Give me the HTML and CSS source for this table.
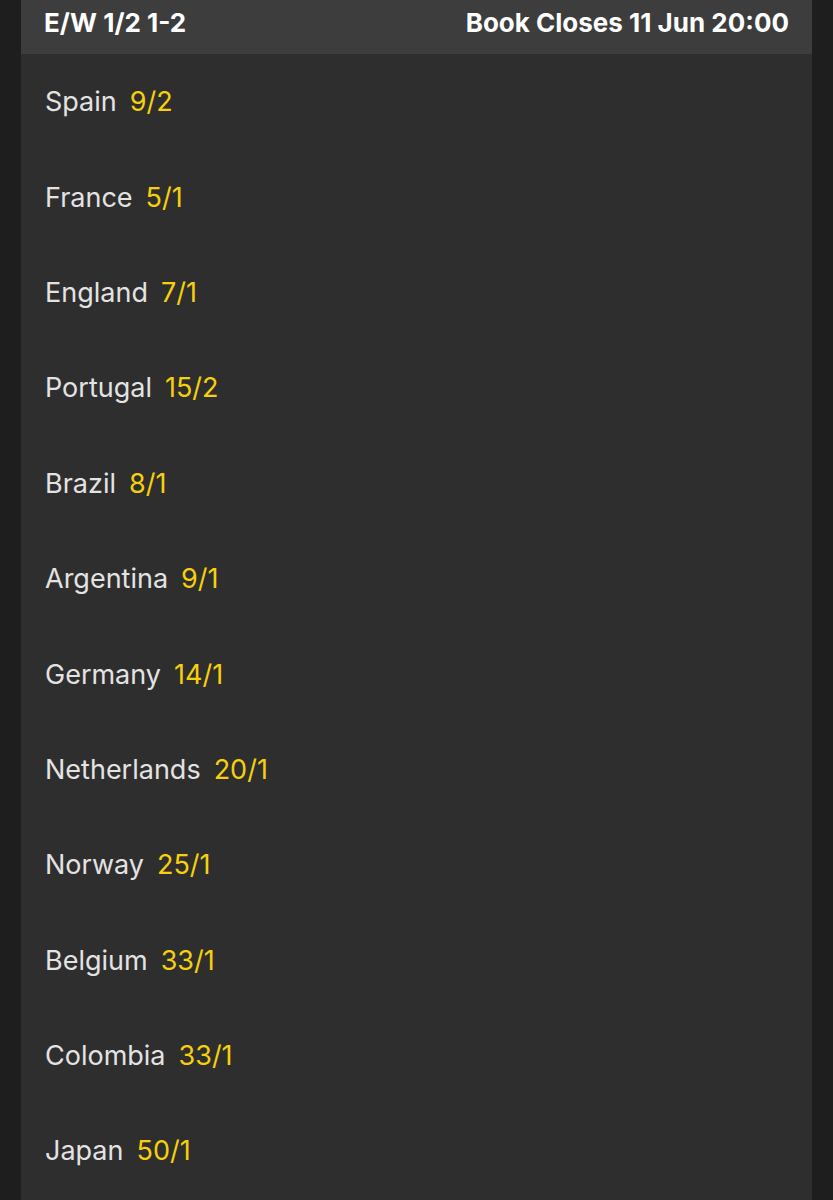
FILE: index.html
```html
<!DOCTYPE html>
<html lang="en">
<head>
  <meta charset="UTF-8" />
  <meta name="viewport" content="width=device-width, initial-scale=1.0"/>
  <title>Outright Odds</title>
  <link rel="stylesheet" href="styles.css">
</head>
<body>
  <div class="market">
    <div class="market-head">
      <span>E/W 1/2 1-2</span>
      <span>Book Closes 11 Jun 20:00</span>
    </div>

    <ul class="runners">
      <li><span class="team">Spain</span> <span class="odds">9/2</span></li>
      <li><span class="team">France</span> <span class="odds">5/1</span></li>
      <li><span class="team">England</span> <span class="odds">7/1</span></li>
      <li><span class="team">Portugal</span> <span class="odds">15/2</span></li>
      <li><span class="team">Brazil</span> <span class="odds">8/1</span></li>
      <li><span class="team">Argentina</span> <span class="odds">9/1</span></li>
      <li><span class="team">Germany</span> <span class="odds">14/1</span></li>
      <li><span class="team">Netherlands</span> <span class="odds">20/1</span></li>
      <li><span class="team">Norway</span> <span class="odds">25/1</span></li>
      <li><span class="team">Belgium</span> <span class="odds">33/1</span></li>
      <li><span class="team">Colombia</span> <span class="odds">33/1</span></li>
      <li><span class="team">Japan</span> <span class="odds">50/1</span></li>
    </ul>
  </div>
</body>
</html>
```

FILE: styles.css
```css
body {
  margin: 0;
  background: #1e1e1e;
  font-family: 'Inter', 'Noto Sans', sans-serif;
  color: #e8e8e8;
}
.market {
  margin: 0 21px;
  background: #2e2e2e;
  min-height: 1200px;
}
.market-head {
  display: flex;
  justify-content: space-between;
  align-items: center;
  height: 44px;
  padding: 0 23px 10px;
  background: #3d3d3d;
  color: #fff;
  font-weight: 700;
  font-size: 26px;
}
.runners {
  list-style: none;
  margin: 0;
  padding: 0;
}
.runners li {
  display: flex;
  align-items: center;
  gap: 13px;
  height: 95.4px;
  padding: 0 24px;
  font-size: 27px;
}
.team {
  color: #e3e3e3;
}
.odds {
  color: #f6d00c;
}
```
